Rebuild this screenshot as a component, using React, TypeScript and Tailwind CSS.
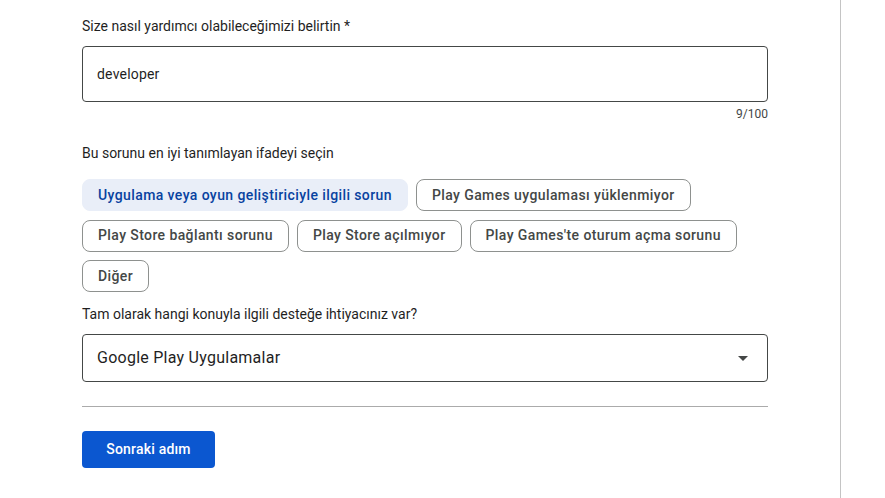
const chips = [
  "Uygulama veya oyun geliştiriciyle ilgili sorun",
  "Play Games uygulaması yüklenmiyor",
  "Play Store bağlantı sorunu",
  "Play Store açılmıyor",
  "Play Games'te oturum açma sorunu",
  "Diğer",
];

export default function App() {
  return (
    <div className="h-[498px] w-full overflow-hidden bg-white font-['Roboto',sans-serif] text-[#1f1f1f]">
      <div className="h-full w-[841px] border-r border-[#c4c4c4] pl-[82px]">
        <div className="flex w-[686px] flex-col pt-[16px]">
          <label className="text-[14px] leading-[20px]">Size nasıl yardımcı olabileceğimizi belirtin *</label>
          <div className="mt-[10px] flex h-[56px] items-center rounded-[4px] border border-[#444746] px-[14px] text-[14px] tracking-[0.2px]">
            developer
          </div>
          <div className="mt-[4px] text-right text-[12px] leading-[16px] text-[#444746]">9/100</div>

          <p className="mt-[21px] text-[14px] leading-[20px]">Bu sorunu en iyi tanımlayan ifadeyi seçin</p>
          <div className="mt-[16px] flex flex-wrap gap-x-2 gap-y-[8.5px]">
            {chips.map((chip, i) =>
              i === 0 ? (
                <button
                  key={chip}
                  type="button"
                  className="h-[32px] rounded-[8px] border border-[#e9eef8] bg-[#e9eef8] px-[15px] text-[14px] font-medium tracking-[0.4px] text-[#0842a0]"
                >
                  {chip}
                </button>
              ) : (
                <button
                  key={chip}
                  type="button"
                  className="h-[32px] rounded-[8px] border border-[#8e918f] bg-white px-[15px] text-[14px] font-medium tracking-[0.4px] text-[#444746]"
                >
                  {chip}
                </button>
              ),
            )}
          </div>

          <p className="mt-[12px] text-[14px] leading-[20px]">Tam olarak hangi konuyla ilgili desteğe ihtiyacınız var?</p>
          <div className="mt-[10px] flex h-[48px] items-center justify-between rounded-[4px] border border-[#444746] pl-[14px] pr-[19px] text-[16px] tracking-[0.25px]">
            <span>Google Play Uygulamalar</span>
            <svg width="10" height="5" viewBox="0 0 10 5" className="fill-[#444746]">
              <path d="M0 0 L10 0 L5 5 Z" />
            </svg>
          </div>

          <div className="mt-[24px] h-px bg-[#ababab]" />

          <div className="mt-[24px]">
            <button
              type="button"
              className="h-[37px] w-[133px] rounded-[4px] bg-[#0b57d0] text-[14px] font-medium tracking-[0.2px] text-white"
            >
              Sonraki adım
            </button>
          </div>
        </div>
      </div>
    </div>
  );
}
